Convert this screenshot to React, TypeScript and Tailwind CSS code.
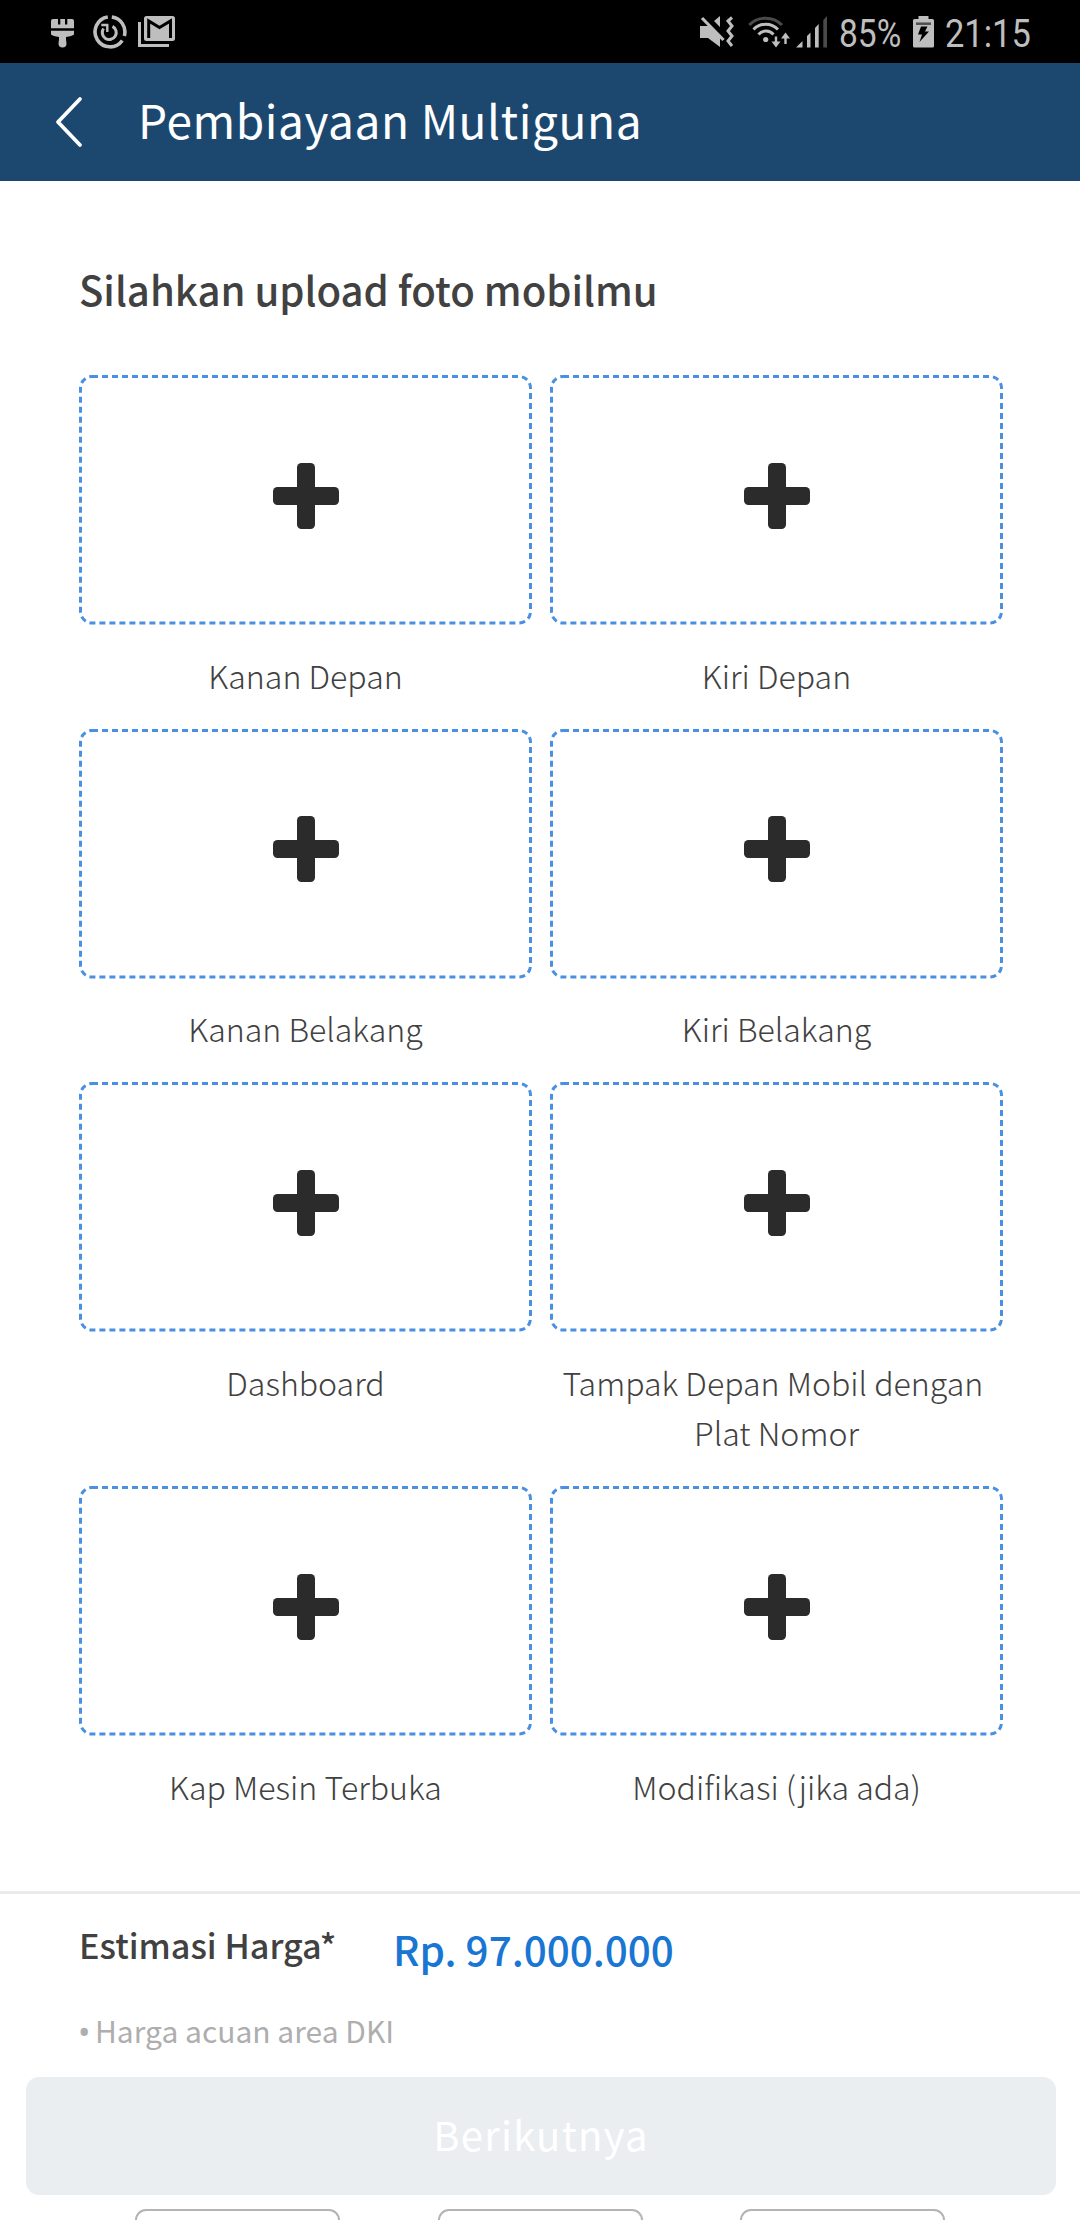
import React from "react";

const ROWS: [string, string][] = [
  ["Kanan Depan", "Kiri Depan"],
  ["Kanan Belakang", "Kiri Belakang"],
  ["Dashboard", "Tampak Depan Mobil dengan Plat Nomor"],
  ["Kap Mesin Terbuka", "Modifikasi (jika ada)"],
];

function BrushIcon() {
  return (
    <svg className="ml-[51px] mt-[3px] h-[29px] w-[23px]" viewBox="0 0 23 29" fill="#bebebe">
      <path d="M0 2Q0 0 2 0H7V5.500H9.300V0H14V5.500H16.300V0H21Q23 0 23 2V9.300H0ZM0 11.800H23V15.500Q21 17 15 18V20.500L15.500 24.500A4 4 0 0 1 7.500 24.500L8 20.500V18Q2 17 0 15.500Z" />
    </svg>
  );
}

function DataSaverIcon() {
  return (
    <svg className="ml-[19px] h-[34px] w-[34px]" viewBox="0 0 34 34" fill="none" stroke="#bebebe" strokeWidth="3.600">
      <path d="M14.800 2A15 15 0 1 0 29.300 25.500M18.800 2A15 15 0 0 1 31.300 21" />
      <path d="M10.500 13.500A7 7 0 1 0 19.500 11.300" strokeWidth="3" />
      <path d="M8.300 10H14.300V17" strokeWidth="2.400" />
    </svg>
  );
}

function MailStackIcon() {
  return (
    <svg className="ml-[11px] h-[31px] w-[37px]" viewBox="0 0 37 31">
      <path d="M1.500 6V29.500H31" fill="none" stroke="#bebebe" strokeWidth="3" />
      <rect x="6" y="0" width="31" height="25" rx="2.500" fill="#bebebe" />
      <path d="M10.700 22V5L21.500 11.500L32.500 5V22" fill="none" stroke="#000" strokeWidth="3" />
    </svg>
  );
}

function MuteVibrateIcon() {
  return (
    <svg className="h-[32px] w-[34px]" viewBox="0 0 34 32">
      <path d="M0 10H8L20 0V31L8 22H0Z" fill="#bebebe" />
      <path d="M4 -1L27 22.500" stroke="#000" strokeWidth="6" />
      <path d="M2 2L23.500 24" stroke="#bebebe" strokeWidth="3.200" />
      <path d="M32 1.500L28 5L32 10L28 15L32 20L28 25L32 30" fill="none" stroke="#bebebe" strokeWidth="3" />
    </svg>
  );
}

function WifiIcon() {
  return (
    <svg className="ml-[14px] h-[32px] w-[42px]" viewBox="0 0 42 32" fill="none" stroke="#bebebe" strokeWidth="3">
      <path d="M1.200 9A23 23 0 0 1 34 9" stroke="#4a4a4a" />
      <path d="M5.500 13.500A17 17 0 0 1 30 13.500M10.500 18.500A10 10 0 0 1 25.500 18.500" />
      <circle cx="17.700" cy="23.500" r="2.600" fill="#bebebe" stroke="none" />
      <path d="M28 20.500V28M37.500 28V20" strokeWidth="2.400" />
      <path d="M23.500 25.500H32.500L28 31.500ZM33 22.500H42L37.500 16.500Z" fill="#bebebe" stroke="none" />
    </svg>
  );
}

function SignalIcon() {
  return (
    <svg className="ml-[6px] h-[32px] w-[32px]" viewBox="0 0 32 32" fill="#bebebe">
      <path d="M0 31.500L6.500 25V31.500ZM11 31.500V20L14.500 16.500V31.500ZM19 31.500V12L22.700 8V31.500Z" />
      <path d="M27.300 31.500V4L31 0V31.500Z" fill="#4a4a4a" />
    </svg>
  );
}

function BatteryIcon() {
  return (
    <svg className="ml-[14px] h-[32px] w-[21px]" viewBox="0 0 21 32">
      <path d="M1.500 3H5.500V0H15.500V3H19.500Q21 3 21 4.500V30Q21 31.500 19.500 31.500H1.500Q0 31.500 0 30V4.500Q0 3 1.500 3Z" fill="#bebebe" />
      <path d="M3 7.700H18" stroke="#4f4f4f" strokeWidth="2.500" />
      <path d="M8 10.500H14.500L12 15.500H16L6.500 26L9 18.500H5Z" fill="#000" />
    </svg>
  );
}

function StatusBar() {
  return (
    <div className="flex h-[63px] shrink-0 bg-black font-['Roboto',sans-serif] text-[39px] leading-[60px] text-[#bebebe]">
      <div className="flex h-[63px] items-center">
        <BrushIcon />
        <DataSaverIcon />
        <MailStackIcon />
      </div>
      <div className="ml-auto flex h-[63px] items-center pr-[50px]">
        <MuteVibrateIcon />
        <WifiIcon />
        <SignalIcon />
        <div className="ml-[11px] w-[60px]">
          <span className="block w-max origin-left scale-x-[0.86] pt-[4px]">85%</span>
        </div>
        <BatteryIcon />
        <div className="ml-[11px] w-[85px]">
          <span className="block w-max origin-left scale-x-[0.883] pt-[4px]">21:15</span>
        </div>
      </div>
    </div>
  );
}

function UploadTile({ label }: { label: string }) {
  return (
    <div className="w-[453px] shrink-0">
      <button className="relative flex h-[249.5px] w-full items-center justify-center pb-[8px]">
        {/* dashed outline with a 6px dash and a 4px gap */}
        <svg className="absolute inset-0 h-[250px] w-[453px]" viewBox="0 0 453 250" fill="none" stroke="#4a90e2" strokeWidth="3">
          <rect x="1.500" y="1.500" width="450" height="246.500" rx="11.500" strokeDasharray="6 4" />
        </svg>
        <svg className="h-[66px] w-[66px]" viewBox="0 0 66 66" fill="#2b2b2b">
          <rect x="0" y="24" width="66" height="18" rx="4.500" />
          <rect x="24" y="0" width="18" height="66" rx="4.500" />
        </svg>
      </button>
      <p className="whitespace-break-spaces pt-[25px] text-center text-[32.1px] font-light leading-[50.5px] text-[#414141]">{label}</p>
    </div>
  );
}

export default function App() {
  return (
    <div className="flex h-[2220px] w-[1080px] flex-col overflow-hidden bg-white font-['Noto_Sans_CJK_SC',sans-serif]">
      <StatusBar />
      <header className="flex h-[118px] shrink-0 items-center bg-[#1c4870]">
        <svg className="ml-[55px] h-[52px] w-[28px]" viewBox="0 0 28 52" fill="none" stroke="#fff" strokeWidth="3.800" strokeLinecap="round" strokeLinejoin="round">
          <path d="M25 3L3 26L25 49" />
        </svg>
        <h1 className="ml-[55px] pb-[6px] text-[46px] leading-[66px] tracking-[0.6px] text-white">Pembiayaan Multiguna</h1>
      </header>

      <main className="h-[1710px] shrink-0 pl-[79px] pt-[78px]">
        <h2 className="text-[40.1px] font-medium leading-[60px] text-[#414141]">Silahkan upload foto mobilmu</h2>
        <div className="mt-[56px] flex flex-col gap-[28.5px]">
          {ROWS.map(([left, right]) => (
            <div key={left} className="flex gap-[18px]">
              <UploadTile label={left} />
              <UploadTile label={right} />
            </div>
          ))}
        </div>
      </main>

      <footer className="flex shrink-0 flex-col border-t-[3px] border-[#ebebeb]">
        <div className="flex items-start pl-[79px]">
          <span className="mt-[25px] w-[314px] text-[34.2px] font-medium leading-[50px] text-[#414141]">Estimasi Harga*</span>
          <span className="mt-[25px] text-[40.4px] font-medium leading-[60px] text-[#1976d2]">Rp. 97.000.000</span>
        </div>
        <p className="mt-[26px] flex h-[50px] pl-[78px] text-[30px] leading-[50px] text-[#aeaeae]">
          <span className="w-[17px] pt-[2px] font-['Noto_Sans',sans-serif] text-[33px]">•</span>
          Harga acuan area DKI
        </p>
        <button className="ml-[26px] mt-[22px] h-[118px] w-[1030px] rounded-[13px] bg-[#eaeef1] pb-[5px] text-[40px] leading-[60px] tracking-[1.3px] text-white">
          Berikutnya
        </button>
        <div className="mt-[14px] flex gap-[97.5px] pl-[135px]">
          {[0, 1, 2].map((i) => (
            <div key={i} className="h-[60px] w-[205px] shrink-0 rounded-[11px] border-2 border-[#b4b4b4]" />
          ))}
        </div>
      </footer>
    </div>
  );
}
